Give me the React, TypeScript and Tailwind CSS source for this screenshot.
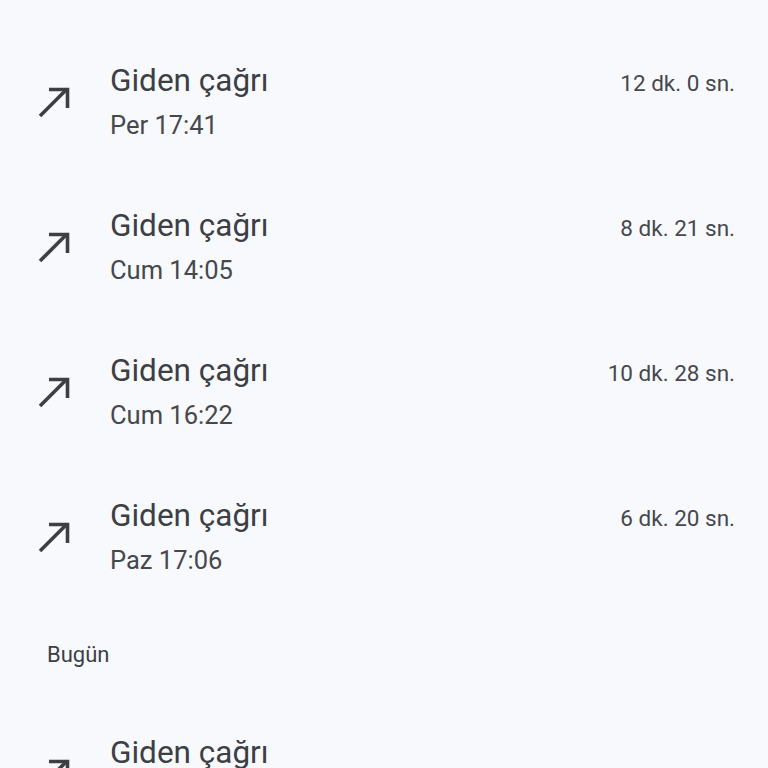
const calls = [
  { day: "Per 17:41", dur: "12 dk. 0 sn." },
  { day: "Cum 14:05", dur: "8 dk. 21 sn." },
  { day: "Cum 16:22", dur: "10 dk. 28 sn." },
  { day: "Paz 17:06", dur: "6 dk. 20 sn." },
];

const OutgoingIcon = () => (
  <svg width="36" height="36" viewBox="0 0 36 36" className="shrink-0 text-[#3c3f44]">
    <path d="M4 33 L31 6" stroke="currentColor" strokeWidth="3.6" fill="none" />
    <path d="M13 6.5 H31.5 V25" stroke="currentColor" strokeWidth="3.6" fill="none" />
  </svg>
);

const CallRow = ({ day, dur }: { day: string; dur?: string }) => (
  <div className="flex items-center h-[145px] pl-[36px] pr-[33px]">
    <OutgoingIcon />
    <div className="ml-[38px] flex-1">
      <div className="flex items-baseline justify-between">
        <span className="text-[31.5px] leading-[40px] text-[#3c3f44]">Giden çağrı</span>
        {dur && <span className="text-[22.5px] text-[#45484d]">{dur}</span>}
      </div>
      <div className="mt-[8px] h-[32px] text-[25.5px] leading-[32px] text-[#45484d]">{day}</div>
    </div>
  </div>
);

export default function App() {
  return (
    <div className="w-[768px] h-[768px] overflow-hidden bg-[#f8f9fd]" style={{ fontFamily: "Roboto, 'Noto Sans', sans-serif" }}>
      <div className="pt-[28px]">
        {calls.map((c, i) => (
          <CallRow key={i} day={c.day} dur={c.dur} />
        ))}
        <div className="h-[92px] flex items-center pl-[47px] text-[22px] text-[#3c3f44]">Bugün</div>
        <CallRow day="" />
      </div>
    </div>
  );
}
